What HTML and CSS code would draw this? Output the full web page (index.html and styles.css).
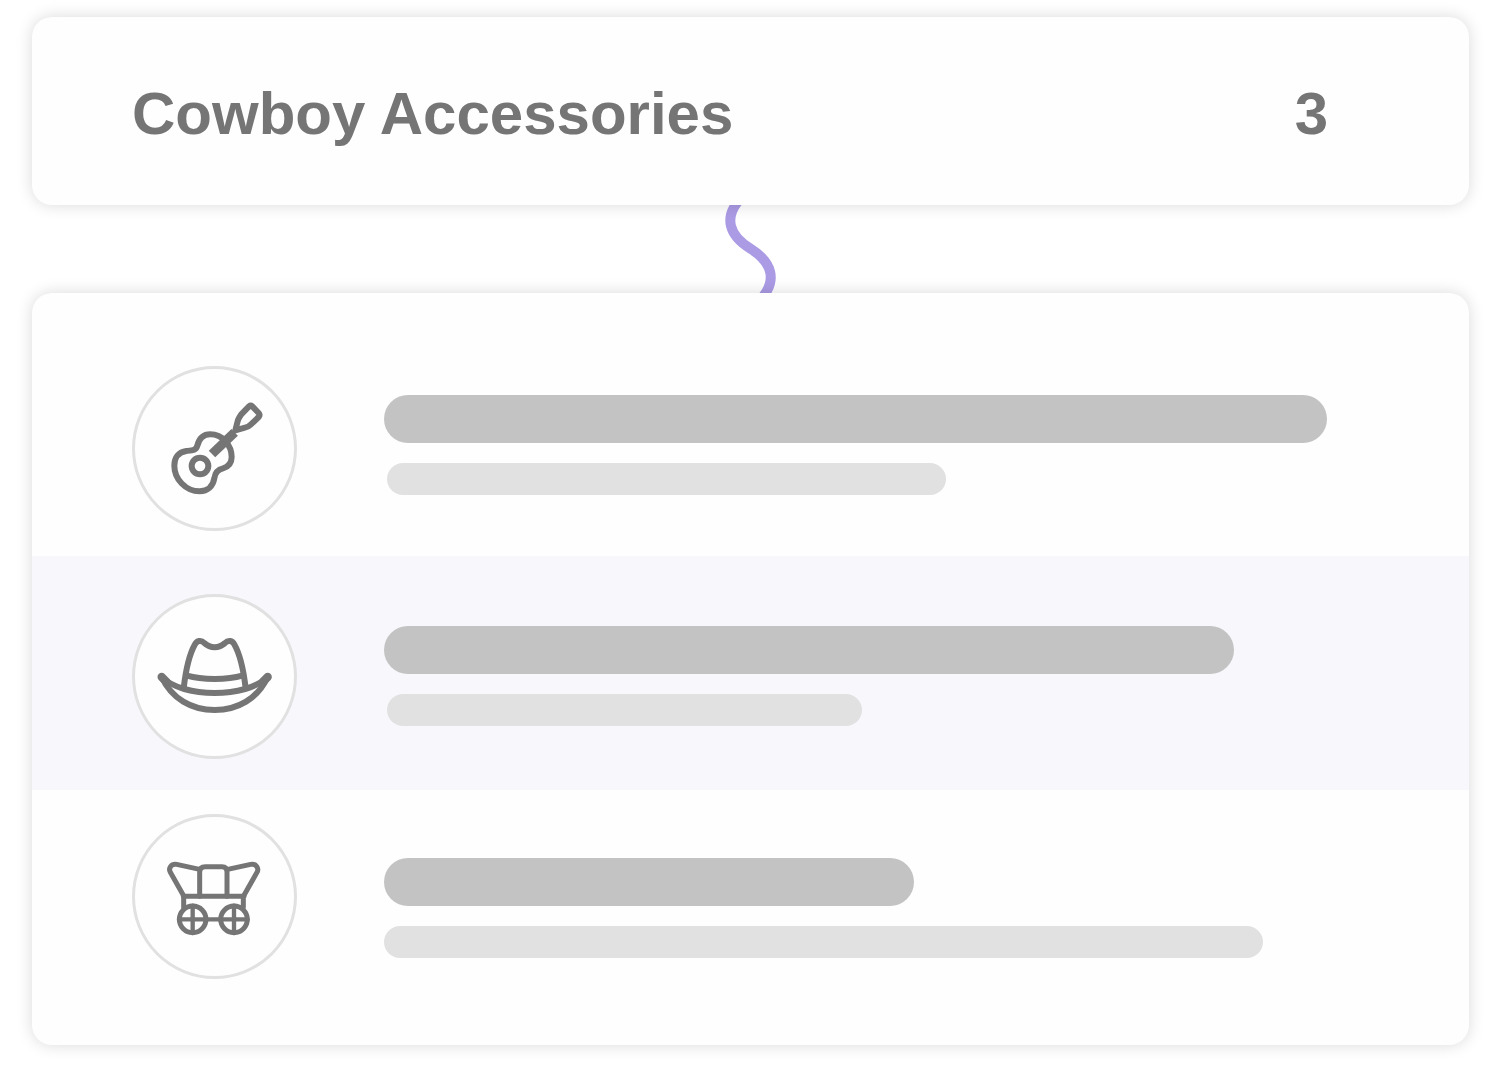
FILE: index.html
```html
<!DOCTYPE html>
<html lang="en">
<head>
    <meta charset="UTF-8">
    <meta name="viewport" content="width=device-width, initial-scale=1.0">
    <title>Cowboy Accessories</title>
    <link rel="stylesheet" href="styles.css">
</head>
<body>
    <main>
        <header class="card summary">
            <h1>Cowboy Accessories</h1>
            <span class="count">3</span>
        </header>

        <svg class="connector" viewBox="0 0 62 88" aria-hidden="true">
            <path d="M20 -6C4 12 8 30 31 44C53 58 57 76 41 94"/>
        </svg>

        <ul class="card items">
            <li class="item item-first">
                <div class="avatar">
                    <!-- guitar -->
                    <svg viewBox="0 0 477 477" stroke-width="18" aria-hidden="true">
                        <path d="M187 230C193 206 205 196 226 196C262 196 290 228 290 264C290 280 281 293 264 298C246 302 240 312 238 328C234 352 218 367 194 367C152 367 118 330 118 290C118 264 132 249 154 246C174 244 183 244 187 230Z"/>
                        <circle cx="195" cy="291" r="25"/>
                        <path stroke-width="28" stroke-linecap="butt" d="M231 255L299 190"/>
                        <path d="M301 184L309 153Q311 147 318 137L342 112Q347 108 352 112L371 132Q376 138 371 144L347 167Q340 174 330 176Z"/>
                    </svg>
                </div>
                <div class="lines">
                    <div class="line title" style="width: 100%"></div>
                    <div class="line detail" style="width: 59.3%"></div>
                </div>
            </li>
            <li class="item item-selected">
                <div class="avatar">
                    <!-- hat -->
                    <svg viewBox="0 0 477 477" stroke-width="18" aria-hidden="true">
                        <path d="M80 240C112 272 176 288 239 288C302 288 366 272 398 240"/>
                        <path d="M80 240C110 305 170 339 239 339C308 339 368 305 398 240"/>
                        <path stroke-linecap="butt" d="M146 274C152 222 164 170 180 142C186 131 198 128 208 138C226 155 252 155 270 138C280 128 292 131 298 142C314 170 326 222 332 274"/>
                        <path stroke-linecap="butt" d="M156 236C200 249 278 249 322 236"/>
                        <path stroke-width="25" d="M80 240L94 254M398 240L384 254"/>
                    </svg>
                </div>
                <div class="lines">
                    <div class="line title" style="width: 90.1%"></div>
                    <div class="line detail" style="width: 50.4%"></div>
                </div>
            </li>
            <li class="item item-last">
                <div class="avatar">
                    <!-- wagon -->
                    <svg viewBox="0 0 477 477" stroke-width="15" aria-hidden="true">
                        <path d="M194 157L125 142C109 139 99 154 106 166L145 235"/>
                        <path d="M278 157L347 142C363 139 373 154 366 166L327 235"/>
                        <path d="M194 238V166Q194 149 211 149H261Q276 149 276 166V238"/>
                        <path d="M145 238H327M146 238V270M325 238V270"/>
                        <circle cx="173" cy="307" r="40"/>
                        <circle cx="297" cy="307" r="40"/>
                        <path stroke-width="13" d="M132 307H338M173 266V348M297 266V348"/>
                    </svg>
                </div>
                <div class="lines">
                    <div class="line title" style="width: 56.2%"></div>
                    <div class="line detail" style="width: 93.2%"></div>
                </div>
            </li>
        </ul>
    </main>
</body>
</html>
```
FILE: styles.css
```css
* {
    box-sizing: border-box;
}
body {
    margin: 0;
    padding: 17px 31px 22px 32px;
    background: #fff;
    color: #757575;
    font-family: "Liberation Sans", Arial, sans-serif;
}
.card {
    position: relative;
    background: #fefefe;
    border-radius: 20px;
    box-shadow: 0 0 16px rgba(0, 0, 0, 0.15);
}
.summary {
    display: flex;
    justify-content: space-between;
    align-items: center;
    padding: 63px 141px 57px 100px;
    font-size: 60px;
    font-weight: bold;
    line-height: 68px;
}
h1 {
    margin: 0;
    font-size: inherit;
}
.connector {
    display: block;
    width: 62px;
    height: 88px;
    margin: 0 auto;
    fill: none;
    stroke: #ab9be5;
    stroke-width: 10;
}
.items {
    margin: 0;
    padding: 0;
    list-style: none;
    overflow: hidden;
}
.item {
    display: flex;
    align-items: flex-start;
    gap: 87px;
    padding: 0 142px 0 100px;
}
.item-first {
    padding-top: 73px;
    padding-bottom: 25px;
}
.item-selected {
    padding-top: 38px;
    padding-bottom: 31px;
    background: #f8f7fc;
}
.item-last {
    padding-top: 24px;
    padding-bottom: 66px;
}
.avatar {
    flex: none;
    width: 165px;
    height: 165px;
    border: 3px solid #e1e1e1;
    border-radius: 50%;
    background: #fefefe;
}
.avatar svg {
    display: block;
    width: 100%;
    height: 100%;
    fill: none;
    stroke: #757575;
    stroke-linecap: round;
    stroke-linejoin: round;
}
.lines {
    flex: 1;
    padding-top: 29px;
}
.item-selected .lines {
    padding-top: 32px;
}
.item-last .lines {
    padding-top: 44px;
}
.line {
    border-radius: 24px;
}
.title {
    height: 48px;
    margin-bottom: 20px;
    background: #c3c3c3;
}
.detail {
    height: 32px;
    margin-left: 3px;
    background: #e1e1e1;
}
.item-last .detail {
    margin-left: 0;
}
```
